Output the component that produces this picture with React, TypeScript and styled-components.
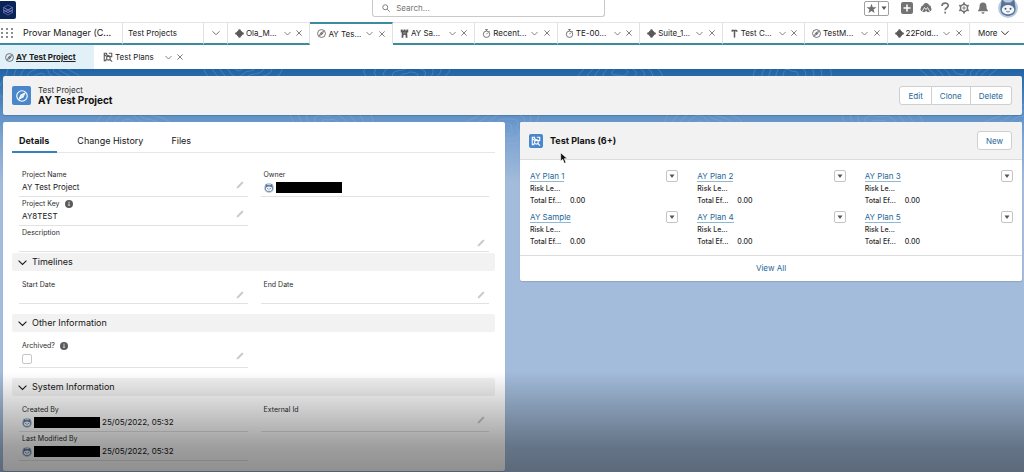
import React from "react";
import styled, { createGlobalStyle, css } from "styled-components";

const GlobalStyle = createGlobalStyle`
  *, *::before, *::after { box-sizing: border-box; }
  html, body { margin: 0; padding: 0; }
  body { background: #a3bcdb; color: #161616; font: 400 8px/12px Inter, "Liberation Sans", sans-serif; }
  button, input { font: inherit; color: inherit; }
  button { cursor: pointer; }
  h1, h2, p, dl, dd, dt, ul { margin: 0; padding: 0; }
`;

/* ---------- icons ---------- */

const Svg = styled.svg<{ $s?: number }>`
  display: block;
  flex: none;
  width: ${(p) => p.$s ?? 10}px;
  height: ${(p) => p.$s ?? 10}px;
`;

type IconProps = { size?: number };

const Chevron = ({ size = 8 }: IconProps) => (
  <Svg $s={size} viewBox="0 0 16 16" fill="none" stroke="currentColor" strokeWidth="1.800">
    <path d="M1 4.500 8 11.500l7-7" />
  </Svg>
);

const Cross = ({ size = 7 }: IconProps) => (
  <Svg $s={size} viewBox="0 0 16 16" fill="none" stroke="currentColor" strokeWidth="2.200">
    <path d="M1 1l14 14M15 1 1 15" />
  </Svg>
);

const CompassIcon = ({ size = 9 }: IconProps) => (
  <Svg $s={size} viewBox="0 0 24 24" fill="none" stroke="currentColor" strokeWidth="2.200">
    <circle cx="12" cy="12" r="10.500" />
    <path d="M17.500 6.500 14 14l-7.500 3.500L10 10z" />
    <circle cx="12" cy="12" r="1" fill="currentColor" />
  </Svg>
);

const PuzzleIcon = ({ size = 9 }: IconProps) => (
  <Svg $s={size} viewBox="0 0 24 24" fill="currentColor">
    <rect x="5" y="5" width="14" height="14" rx="2" transform="rotate(45 12 12)" />
    <rect x="5" y="5" width="14" height="14" rx="3" />
    <circle cx="12" cy="4" r="3.500" />
    <circle cx="12" cy="20" r="3.500" />
    <circle cx="4" cy="12" r="3.500" />
    <circle cx="20" cy="12" r="3.500" />
  </Svg>
);

const RookIcon = ({ size = 9 }: IconProps) => (
  <Svg $s={size} viewBox="0 0 24 24" fill="currentColor">
    <path d="M2 1h5v3h2.500V1h5v3H17V1h5v8h-3l1 14h-5v-5a3 3 0 0 0-6 0v5H4L5 9H2z" />
    <path d="M8 10.500h8" stroke="#fff" strokeWidth="1" />
  </Svg>
);

const StopwatchIcon = ({ size = 9 }: IconProps) => (
  <Svg $s={size} viewBox="0 0 24 24" fill="none" stroke="currentColor" strokeWidth="2.200">
    <circle cx="12" cy="14" r="8.500" />
    <path d="M8.500 1.500h7M12 2v3M12 14l3-4M18.500 5.500l2 2" />
  </Svg>
);

const HammerIcon = ({ size = 9 }: IconProps) => (
  <Svg $s={size} viewBox="0 0 24 24" fill="currentColor">
    <path d="M4 2h13l3 2v3h-3l-2-1h-1v15a2 2 0 0 1-4 0V6H8L7 7H4z" />
  </Svg>
);

const PlanIcon = ({ size = 10 }: IconProps) => (
  <Svg $s={size} viewBox="0 0 24 24" fill="none" stroke="currentColor" strokeWidth="2.600">
    <path d="M9 3H3v18h5M14 3h7v9M3 6l6 5M9 2c-2 4 1 7 5 7l7 3" />
    <circle cx="13" cy="15" r="4.500" />
    <path d="m16 18 6 5M3 21l6-3" />
  </Svg>
);

const PencilIcon = () => (
  <Svg $s={8} viewBox="0 0 16 16" fill="#cacaca">
    <path d="M1 15l1.200-4L11 2.200l.8-.8.8-.4 2.400 2.400-.4.800-.8.8L5 13.800z" />
  </Svg>
);

const InfoIcon = () => (
  <Svg $s={8} viewBox="0 0 16 16">
    <circle cx="8" cy="8" r="8" fill="#5c5c5c" />
    <path d="M8 3.500v2M8 7v5" stroke="#fff" strokeWidth="2" />
  </Svg>
);

const SearchIcon = () => (
  <Svg $s={8} viewBox="0 0 16 16" fill="none" stroke="#747474" strokeWidth="1.800">
    <circle cx="6.500" cy="6.500" r="5" />
    <path d="m10.500 10.500 5 5" />
  </Svg>
);

const Avatar = ({ size = 10 }: IconProps) => (
  <Svg $s={size} viewBox="0 0 24 24">
    <circle cx="12" cy="12" r="12" fill="#b9cbe2" />
    <path d="M4.500 1.500 9 5.500h6l4.500-4 1.500 10c1 6-3 10-9 10S2 17.500 3 11.500z" fill="#5a7396" />
    <ellipse cx="12" cy="14" rx="7.500" ry="5.500" fill="#f3f6fa" />
    <circle cx="9" cy="13" r="1.200" fill="#3f587c" />
    <circle cx="15" cy="13" r="1.200" fill="#3f587c" />
    <path d="M10 16q2 1.500 4 0" stroke="#3f587c" fill="none" />
  </Svg>
);

const BrandIcon = () => (
  <Svg $s={12} viewBox="0 0 24 24" fill="none" strokeWidth="1.500">
    <path d="M12 2l9 5v10l-9 5-9-5V7z" stroke="#5b6fb5" />
    <path d="m3 7 9 5 9-5M3 12l9 5 9-5" stroke="#a9a2dc" />
    <path d="m3 17 9-5 9 5" stroke="#6d80c9" />
  </Svg>
);

const Caret = () => (
  <Svg $s={6} viewBox="0 0 12 12" fill="#555">
    <path d="M1 3h10L6 10z" />
  </Svg>
);

const StarIcon = () => (
  <Svg $s={11} viewBox="0 0 24 24" fill="#6f6f6f">
    <path d="m12 1.500 2.800 7.500 8 .3-6.300 5 2.200 7.700L12 17.500 5.300 22l2.200-7.700-6.300-5 8-.3z" />
  </Svg>
);

const PlusTile = () => (
  <Svg $s={12} viewBox="0 0 24 24">
    <rect width="24" height="24" rx="4" fill="#747474" />
    <path d="M12 5v14M5 12h14" stroke="#fff" strokeWidth="3" />
  </Svg>
);

const TrailIcon = () => (
  <Svg $s={12} viewBox="0 0 24 24">
    <path d="M7 18.500H4.500A3.800 3.800 0 0 1 2 12c-.5-3 2-5 4-5C7.500 3 10 2 12.500 2c3 0 5 2 5.500 4.500 3 0 4.500 2.500 4 5.500a3.800 3.800 0 0 1-2.500 6.500H17" fill="#747474" />
    <path d="M3 21 9 11l3 4 3-4 6 10z" fill="#747474" stroke="#fff" strokeWidth="1.700" />
    <path d="M10.500 22v-4h3v4z" fill="#fff" />
  </Svg>
);

const HelpIcon = () => (
  <Svg $s={12} viewBox="0 0 24 24" fill="none" stroke="#747474" strokeWidth="3.400">
    <path d="M6 8c0-8 12.500-7.500 12.500-.8 0 4.500-6.200 4.300-6.200 9.300" />
    <path d="M12.300 19.500v3.500" />
  </Svg>
);

const GearIcon = () => (
  <Svg $s={12} viewBox="0 0 24 24" fill="none" stroke="#747474">
    <circle cx="12" cy="12" r="7" strokeWidth="3" />
    <circle cx="12" cy="12" r="2.200" strokeWidth="2" />
    <path d="M12 1v4M12 19v4M2.500 6.500l3.400 2M18.100 15.500l3.400 2M2.500 17.500l3.400-2M18.100 8.500l3.400-2" strokeWidth="4" />
  </Svg>
);

const BellIcon = () => (
  <Svg $s={12} viewBox="0 0 24 24" fill="#747474">
    <path d="M12 1c4.500 0 7 3.200 7 7.500 0 5 1 6.500 3 8.500v1.500H2V17c2-2 3-3.500 3-8.500C5 4.200 7.500 1 12 1zM9 20.500h6a3 3 0 0 1-6 0z" />
  </Svg>
);

/* ---------- page frame ---------- */

const Page = styled.div`
  position: relative;
  display: flex;
  flex-direction: column;
  min-height: 100vh;
`;

const BottomShade = styled.div`
  position: fixed;
  left: 0;
  right: 0;
  bottom: 0;
  height: 100px;
  pointer-events: none;
  background: linear-gradient(rgba(0, 0, 0, 0), rgba(0, 0, 0, 0.16) 30%, rgba(0, 0, 0, 0.38) 75%, rgba(0, 0, 0, 0.44));
`;

const TopBar = styled.header`
  display: grid;
  grid-template-columns: 8fr 233px 9fr;
  height: 22px;
  background: #fff;
`;

const Brand = styled.div`
  display: grid;
  place-items: center;
  width: 16px;
  height: 18px;
  margin-top: 1px;
  border-radius: 0 2px 2px 0;
  background: #0b2458;
`;

const SearchBox = styled.label`
  display: flex;
  align-items: center;
  gap: 6px;
  height: 17px;
  padding: 0 9px;
  border: 1px solid #c9c9c9;
  border-top: 0;
  border-radius: 0 0 3px 3px;
  input {
    flex: 1;
    min-width: 0;
    height: 12px;
    padding: 0;
    border: 0;
    outline: 0;
    background: none;
  }
  input::placeholder { color: #747474; opacity: 1; }
`;

const Tools = styled.div`
  display: flex;
  justify-content: flex-end;
  align-items: center;
  gap: 7px;
  height: 16px;
  padding-right: 6px;
`;

const ToolButton = styled.button`
  display: grid;
  place-items: center;
  padding: 0;
  border: 0;
  background: none;
`;

const ProfileButton = styled(ToolButton)`
  margin-left: 2px;
`;

const Favorites = styled.div`
  display: flex;
  height: 15px;
  margin-right: 5px;
  border: 1px solid #a0a0a0;
  border-radius: 2px;
  button { width: 13px; }
  button + button { width: 10px; border-left: 1px solid #a0a0a0; }
`;

/* ---------- navigation ---------- */

const NavBar = styled.nav`
  display: flex;
  height: 23px;
  border-top: 1px solid #e5e5e5;
  background: #fff;
`;

const navCell = css`
  display: flex;
  align-items: center;
  border-right: 1px solid #e2e2e2;
  border-bottom: 2px solid #3c8ba0;
`;

const AppName = styled.div`
  ${navCell}
  width: 123px;
  gap: 10px;
  font-size: 9px;
  white-space: nowrap;
`;

const Waffle = styled.button`
  display: grid;
  grid-template-columns: repeat(3, 2px);
  gap: 2px 3px;
  padding: 0 0 0 1px;
  border: 0;
  background: none;
  i { width: 2px; height: 2px; border-radius: 1px; background: #666; }
`;

const NavHome = styled.a`
  ${navCell}
  width: 81px;
  padding-left: 5px;
  color: #222;
  text-decoration: none;
`;

const NavToggle = styled.button`
  ${navCell}
  justify-content: center;
  width: 24px;
  padding: 0;
  border-width: 0 1px 2px 0;
  background: none;
  color: #666;
`;

const NavTab = styled.div<{ $active?: boolean }>`
  ${navCell}
  flex: 1 1 0;
  min-width: 0;
  padding: 0 4px 0 7px;
  color: #666;
  ${(p) =>
    p.$active &&
    css`
      margin-top: -1px;
      border-top: 2px solid #3c8ba0;
      border-bottom-color: #fff;
    `}
`;

const TabLink = styled.a`
  display: flex;
  align-items: center;
  gap: 2px;
  margin-right: auto;
  color: #5a5a5a;
  text-decoration: none;
  white-space: nowrap;
  span { color: #222; }
`;

const TabAction = styled.button`
  display: grid;
  place-items: center;
  width: 12px;
  height: 12px;
  padding: 0;
  border: 0;
  background: none;
  color: #666;
`;

const NavMore = styled.button`
  ${navCell}
  gap: 3px;
  width: 54px;
  padding: 0 0 0 8px;
  border-width: 0 0 2px;
  background: none;
`;

const SubTabs = styled.nav`
  display: flex;
  height: 24px;
  background: #fff;
`;

const SubTab = styled.div<{ $active?: boolean }>`
  display: flex;
  align-items: center;
  width: ${(p) => (p.$active ? 94 : 92)}px;
  padding-left: ${(p) => (p.$active ? 5 : 9)}px;
  background: ${(p) => (p.$active ? "#e1f1f7" : "none")};
  ${(p) =>
    p.$active &&
    css`
      ${TabLink} span { font-weight: 700; text-decoration: underline; }
    `}
`;

/* ---------- workspace ---------- */

const Workspace = styled.main`
  position: relative;
  display: flex;
  flex: 1;
  flex-direction: column;
  gap: 7px;
  padding: 7px 2px 1px 3px;
  background: linear-gradient(#1f63a3, #2a6aab 7px, #5f91c7 46px, #7fa5d2 70px, #a3bcdb 115px);
`;

const WorkspaceArt = styled.svg`
  position: absolute;
  inset: 0;
  width: 100%;
  height: 100px;
  mask-image: linear-gradient(#000 40%, transparent);
`;

const PageHeader = styled.header`
  position: relative;
  display: flex;
  align-items: center;
  gap: 7px;
  height: 39px;
  padding: 0 10px 0 9px;
  border-radius: 2px;
  background: #f2f2f2;
  box-shadow: 0 1px 1px rgba(0, 0, 0, 0.15);
`;

const IconTile = styled.span<{ $s: number }>`
  display: grid;
  place-items: center;
  width: ${(p) => p.$s}px;
  height: ${(p) => p.$s}px;
  border-radius: 2px;
  background: #4a86cb;
  color: #fff;
`;

const HeaderText = styled.div`
  margin-right: auto;
  p { line-height: 9px; color: #333; }
  h1 { font-size: 10px; line-height: 11px; font-weight: 700; color: #111; }
`;

const ButtonGroup = styled.div`
  display: flex;
`;

const Button = styled.button`
  height: 19px;
  padding: 0 8px;
  border: 1px solid #cfcfcf;
  background: #fff;
  color: #1f6797;
  &:first-child { padding-left: 9px; border-radius: 3px 0 0 3px; }
  &:last-child { border-radius: 0 3px 3px 0; }
  & + & { border-left: 0; }
`;

const NewButton = styled(Button)`
  &:last-child { border-radius: 3px; }
`;

const Columns = styled.div`
  position: relative;
  display: grid;
  grid-template-columns: 1fr 1fr;
  gap: 15px;
  flex: 1;
`;

const Card = styled.section`
  border-radius: 2px;
  background: #fff;
  box-shadow: 0 1px 1px rgba(0, 0, 0, 0.12);
`;

/* ---------- details ---------- */

const DetailTabs = styled.div`
  display: flex;
  height: 31px;
  margin: 0 10px 15px 9px;
  padding-top: 9px;
  border-bottom: 1px solid #e6e6e6;
`;

const DetailTab = styled.button<{ $active?: boolean }>`
  height: 22px;
  margin-right: 13px;
  padding: 0 8px 0 7px;
  border: 0;
  border-bottom: 2px solid ${(p) => (p.$active ? "#3a7fc0" : "transparent")};
  background: none;
  font-size: 9px;
  font-weight: ${(p) => (p.$active ? 700 : 400)};
`;

const Fields = styled.div`
  display: grid;
  grid-template-columns: 1fr 1fr;
  column-gap: 13px;
  padding: 0 16px;
`;

const FieldBox = styled.div<{ $wide?: boolean }>`
  grid-column: ${(p) => (p.$wide ? "1 / -1" : "auto")};
  padding: 0 4px 2px 3px;
  border-bottom: 1px solid #e2e2e2;
`;

const FieldLabel = styled.div`
  display: flex;
  align-items: center;
  gap: 5px;
  height: 13px;
  font-size: 7px;
  color: #2c2c2c;
`;

const FieldValue = styled.div<{ $empty?: boolean }>`
  display: flex;
  align-items: center;
  gap: 2px;
  height: ${(p) => (p.$empty ? 10 : 13)}px;
  line-height: 11px;
  white-space: nowrap;
`;

const EditButton = styled.button`
  align-self: flex-start;
  margin-left: auto;
  padding: 0;
  border: 0;
  background: none;
`;

const Redacted = styled.span`
  width: 66px;
  height: 11px;
  background: #000;
  outline: 1px solid #fff;
`;

const CheckBox = styled.input`
  appearance: none;
  width: 10px;
  height: 10px;
  margin: 0;
  border: 1px solid #c6c6c6;
  border-radius: 2px;
  background: #fff;
`;

const SectionToggle = styled.button<{ $first?: boolean }>`
  display: flex;
  align-items: center;
  gap: 5px;
  width: calc(100% - 19px);
  height: 18px;
  margin: ${(p) => (p.$first ? 1 : 10)}px 10px 7px 9px;
  padding: 0 6px;
  border: 0;
  border-radius: 2px;
  background: #f2f2f2;
  font-size: 9px;
`;

type FieldProps = {
  label: string;
  info?: boolean;
  wide?: boolean;
  editable?: boolean;
  htmlFor?: string;
  children?: React.ReactNode;
};

const Field = ({ label, info, wide, editable = true, htmlFor, children }: FieldProps) => (
  <FieldBox $wide={wide}>
    <FieldLabel>
      {htmlFor ? <label htmlFor={htmlFor}>{label}</label> : label}
      {info && <InfoIcon />}
    </FieldLabel>
    <FieldValue $empty={!children}>
      {children}
      {editable && (
        <EditButton aria-label={`Edit ${label}`}>
          <PencilIcon />
        </EditButton>
      )}
    </FieldValue>
  </FieldBox>
);

const Section = ({ title, first }: { title: string; first?: boolean }) => (
  <SectionToggle $first={first} aria-expanded="true">
    <Chevron size={9} />
    {title}
  </SectionToggle>
);

/* ---------- related list ---------- */

const RelatedCard = styled(Card)`
  align-self: start;
  overflow: hidden;
`;

const RelatedHeader = styled.header`
  display: flex;
  align-items: center;
  gap: 7px;
  height: 38px;
  padding: 0 10px 0 9px;
  border-bottom: 1px solid #dcdcdc;
  background: #f2f2f2;
  h2 { position: relative; margin-right: auto; font-size: 9px; font-weight: 700; color: #111; }
`;

const PlanGrid = styled.ul`
  display: grid;
  grid-template-columns: repeat(3, 1fr);
  padding: 10px 0 3px;
  list-style: none;
`;

const PlanItem = styled.li`
  height: 41px;
  padding: 0 9px 0 10px;
`;

const PlanTop = styled.div`
  display: flex;
  justify-content: space-between;
  align-items: center;
  height: 13px;
`;

const PlanLink = styled.a`
  border-bottom: 1px solid #8fb9d3;
  line-height: 10px;
  color: #1f6797;
  text-decoration: none;
`;

const MenuButton = styled.button`
  display: grid;
  place-items: center;
  align-self: flex-start;
  width: 12px;
  height: 12px;
  padding: 0;
  border: 1px solid #c4c4c4;
  border-radius: 2px;
  background: #fff;
`;

const PlanFacts = styled.dl`
  display: grid;
  grid-template-columns: 40px 1fr;
  grid-auto-rows: 12px;
  line-height: 12px;
  font-size: 7px;
  font-weight: 500;
  color: #2a2a2a;
`;

const ViewAll = styled.a`
  display: block;
  padding: 6px 0 7px;
  border-top: 1px solid #dcdcdc;
  line-height: 12px;
  text-align: center;
  color: #1f6797;
  text-decoration: none;
`;

const Pointer = styled.svg`
  position: absolute;
  left: 10px;
  top: 17px;
  width: 8px;
  height: 12px;
`;

/* ---------- data ---------- */

const tabs = [
  { icon: PuzzleIcon, label: "Ola_M..." },
  { icon: CompassIcon, label: "AY Tes...", active: true },
  { icon: RookIcon, label: "AY Sa..." },
  { icon: StopwatchIcon, label: "Recent..." },
  { icon: StopwatchIcon, label: "TE-00..." },
  { icon: PuzzleIcon, label: "Suite_1..." },
  { icon: HammerIcon, label: "Test C..." },
  { icon: CompassIcon, label: "TestM..." },
  { icon: PuzzleIcon, label: "22Fold..." },
];

const plans = ["AY Plan 1", "AY Plan 2", "AY Plan 3", "AY Sample", "AY Plan 4", "AY Plan 5"];

const peaks = [
  [40, 10], [130, 62], [240, -4], [330, 55], [410, 8], [505, 60],
  [620, 2], [700, 58], [790, 6], [880, 56], [960, 0], [1024, 62],
];

const contour = (cx: number, cy: number, r: number, seed: number) => {
  const points = Array.from({ length: 37 }, (_, i) => {
    const a = (i / 36) * Math.PI * 2;
    const d = r * (1 + 0.14 * Math.sin(3 * a + seed) + 0.08 * Math.cos(5 * a + seed * 2));
    return `${(cx + d * 1.5 * Math.cos(a)).toFixed(1)} ${(cy + d * Math.sin(a)).toFixed(1)}`;
  });
  return `M${points.join("L")}Z`;
};

export default function App() {
  return (
    <>
      <GlobalStyle />
      <Page>
        <TopBar>
          <Brand><BrandIcon /></Brand>
          <SearchBox>
            <SearchIcon />
            <input type="search" placeholder="Search..." aria-label="Search" />
          </SearchBox>
          <Tools>
            <Favorites>
              <ToolButton aria-label="Favorite"><StarIcon /></ToolButton>
              <ToolButton aria-label="Favorites list"><Caret /></ToolButton>
            </Favorites>
            <ToolButton aria-label="Create"><PlusTile /></ToolButton>
            <ToolButton aria-label="Learning"><TrailIcon /></ToolButton>
            <ToolButton aria-label="Help"><HelpIcon /></ToolButton>
            <ToolButton aria-label="Setup"><GearIcon /></ToolButton>
            <ToolButton aria-label="Notifications"><BellIcon /></ToolButton>
            <ProfileButton aria-label="Profile"><Avatar size={20} /></ProfileButton>
          </Tools>
        </TopBar>

        <NavBar>
          <AppName>
            <Waffle aria-label="App launcher">
              {Array.from({ length: 9 }, (_, i) => <i key={i} />)}
            </Waffle>
            Provar Manager (C...
          </AppName>
          <NavHome href="#projects">Test Projects</NavHome>
          <NavToggle aria-label="Test Projects list"><Chevron /></NavToggle>
          {tabs.map(({ icon: Icon, label, active }) => (
            <NavTab key={label} $active={active}>
              <TabLink href="#tab"><Icon /><span>{label}</span></TabLink>
              <TabAction aria-label="Tab actions"><Chevron size={7} /></TabAction>
              <TabAction aria-label="Close tab"><Cross size={6} /></TabAction>
            </NavTab>
          ))}
          <NavMore>More <Chevron /></NavMore>
        </NavBar>

        <SubTabs>
          <SubTab $active>
            <TabLink href="#project"><CompassIcon /><span>AY Test Project</span></TabLink>
          </SubTab>
          <SubTab>
            <TabLink href="#plans"><PlanIcon /><span>Test Plans</span></TabLink>
            <TabAction aria-label="Tab actions"><Chevron size={7} /></TabAction>
            <TabAction aria-label="Close tab"><Cross size={6} /></TabAction>
          </SubTab>
        </SubTabs>

        <Workspace>
          <WorkspaceArt aria-hidden="true" fill="none" stroke="#b5d3ee" strokeOpacity="0.3" strokeWidth="0.8">
            {peaks.map(([x, y], i) =>
              [5, 10, 15, 20, 26].map((r) => <path key={`${i}-${r}`} d={contour(x, y, r, i)} />)
            )}
          </WorkspaceArt>

          <PageHeader>
            <IconTile $s={19}><CompassIcon size={12} /></IconTile>
            <HeaderText>
              <p>Test Project</p>
              <h1>AY Test Project</h1>
            </HeaderText>
            <ButtonGroup>
              <Button>Edit</Button>
              <Button>Clone</Button>
              <Button>Delete</Button>
            </ButtonGroup>
          </PageHeader>

          <Columns>
            <Card>
              <DetailTabs>
                <DetailTab $active>Details</DetailTab>
                <DetailTab>Change History</DetailTab>
                <DetailTab>Files</DetailTab>
              </DetailTabs>
              <Fields>
                <Field label="Project Name">AY Test Project</Field>
                <Field label="Owner" editable={false}><Avatar /><Redacted /></Field>
                <Field label="Project Key" info>AY8TEST</Field>
                <span />
                <Field label="Description" wide />
              </Fields>
              <Section title="Timelines" first />
              <Fields>
                <Field label="Start Date" />
                <Field label="End Date" />
              </Fields>
              <Section title="Other Information" />
              <Fields>
                <Field label="Archived?" info htmlFor="archived">
                  <CheckBox id="archived" type="checkbox" />
                </Field>
              </Fields>
              <Section title="System Information" />
              <Fields>
                <Field label="Created By" editable={false}><Avatar /><Redacted /> 25/05/2022, 05:32</Field>
                <Field label="External Id" />
                <Field label="Last Modified By" editable={false}><Avatar /><Redacted /> 25/05/2022, 05:32</Field>
              </Fields>
            </Card>

            <RelatedCard>
              <RelatedHeader>
                <IconTile $s={14}><PlanIcon /></IconTile>
                <h2>
                  Test Plans (6+)
                  <Pointer viewBox="0 0 12 18" aria-hidden="true">
                    <path d="M1 1v13l3-3 2.500 6 2.500-1-2.500-6H11z" fill="#111" stroke="#fff" />
                  </Pointer>
                </h2>
                <NewButton>New</NewButton>
              </RelatedHeader>
              <PlanGrid>
                {plans.map((plan) => (
                  <PlanItem key={plan}>
                    <PlanTop>
                      <PlanLink href="#plan">{plan}</PlanLink>
                      <MenuButton aria-label={`Actions for ${plan}`}><Caret /></MenuButton>
                    </PlanTop>
                    <PlanFacts>
                      <dt>Risk Le...</dt><dd />
                      <dt>Total Ef...</dt><dd>0.00</dd>
                    </PlanFacts>
                  </PlanItem>
                ))}
              </PlanGrid>
              <ViewAll href="#all">View All</ViewAll>
            </RelatedCard>
          </Columns>
        </Workspace>
        <BottomShade />
      </Page>
    </>
  );
}
